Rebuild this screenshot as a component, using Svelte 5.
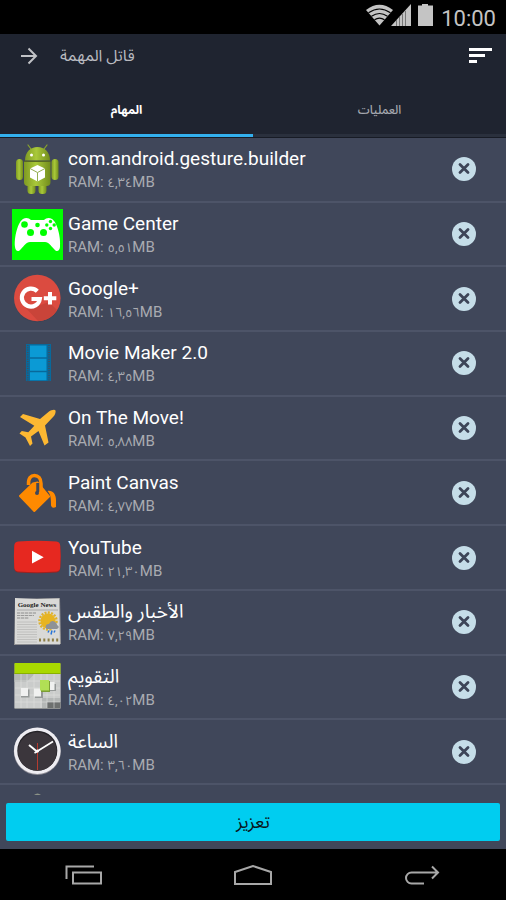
<script lang="ts">
  type App = { name: string; ram: string; icon: string };

  let apps: App[] = $state([
    { name: 'com.android.gesture.builder', ram: '٤,٣٤', icon: 'android' },
    { name: 'Game Center', ram: '٥,٥١', icon: 'game' },
    { name: 'Google+', ram: '١٦,٥٦', icon: 'gplus' },
    { name: 'Movie Maker 2.0', ram: '٤,٣٥', icon: 'movie' },
    { name: 'On The Move!', ram: '٥,٨٨', icon: 'plane' },
    { name: 'Paint Canvas', ram: '٤,٧٧', icon: 'paint' },
    { name: 'YouTube', ram: '٢١,٣٠', icon: 'youtube' },
    { name: 'الأخبار والطقس', ram: '٧,٢٩', icon: 'news' },
    { name: 'التقويم', ram: '٤,٠٢', icon: 'calendar' },
    { name: 'الساعة', ram: '٣,٦٠', icon: 'clock' }
  ]);

  let activeTab = $state(0);
  const tabs = ['المهام', 'العمليات'];

  function kill(app: App) {
    apps = apps.filter((a) => a.name !== app.name);
  }
</script>

{#snippet appIcon(name: string)}
  <svg class="app-icon" viewBox="0 0 51 51" aria-hidden="true">
    {#if name === 'android'}
      <defs>
        <linearGradient id="droid" x1="0" x2="1">
          <stop offset="0" stop-color="#7f9a22" />
          <stop offset=".45" stop-color="#a9c93a" />
          <stop offset="1" stop-color="#728c1c" />
        </linearGradient>
      </defs>
      <path d="M19 5l-3-4M32 5l3-4" stroke="#8aa52c" stroke-width="1.2" stroke-linecap="round" />
      <rect x="15.500" y="36" width="8" height="14" rx="3.500" fill="url(#droid)" />
      <rect x="26.500" y="36" width="8" height="14" rx="3.500" fill="url(#droid)" />
      <rect x="4" y="15" width="7" height="21" rx="3.500" fill="url(#droid)" />
      <rect x="39.500" y="15" width="7" height="21" rx="3.500" fill="url(#droid)" />
      <path d="M12 18h26.500v20q0 4-4 4h-18.500q-4 0-4-4z" fill="url(#droid)" />
      <path d="M13 16.500C13 8 18.500 3 25.500 3S38 8 38 16.500z" fill="url(#droid)" />
      <path d="M12 17.300h26.500" stroke="#5d7119" />
      <circle cx="19.500" cy="11" r="1.500" fill="#fff" />
      <circle cx="31.500" cy="11" r="1.500" fill="#fff" />
      <path d="M25.500 21l7.500 3.500v9l-7.500 4-7.500-4v-9z" fill="#fff" />
      <path d="M18 24.500l7.500 4 7.500-4M25.500 28.500v9" fill="none" stroke="#93ad50" />
    {:else if name === 'game'}
      <path d="M0 0h51v51H0z" fill="#0f0" />
      <path
        d="M11 10c3-2 6-1 8 1h13c2-2 5-3 8-1 5 3 9 18 8 28-.5 5-4 5-6 2-3-3-5-7-9-7H18c-4 0-6 4-9 7-2 3-5.500 3-6-2-1-10 3-25 8-28z"
        fill="#fff"
      />
      <g fill="#0f0">
        <circle cx="12.500" cy="15.500" r="3.300" />
        <circle cx="18.500" cy="23.500" r="3.500" />
        <circle cx="31.500" cy="23.500" r="3.500" />
        <circle cx="25.500" cy="16" r="2.300" />
        <circle cx="38.500" cy="12.500" r="1.700" />
        <circle cx="34.800" cy="16" r="1.700" />
        <circle cx="42.200" cy="16" r="1.700" />
        <circle cx="38.500" cy="19.500" r="1.700" />
      </g>
    {:else if name === 'gplus'}
      <circle cx="25.300" cy="26" r="23.300" fill="#3b3f4f" opacity=".5" />
      <circle cx="25.300" cy="25" r="23.300" fill="#db4b40" />
      <path d="M12 33l14 15c8 0 15-4 19-11l-8-8-11 4z" fill="#c94439" />
      <path
        d="M25.300 18.300a9 9 0 1 0 2.500 7.700h-8.300"
        fill="none"
        stroke="#fff"
        stroke-width="4.200"
      />
      <path d="M38 19v12.500M31.800 25.200h12.500" stroke="#fff" stroke-width="4" />
    {:else if name === 'movie'}
      <path d="M14 6h25v37H14z" fill="#08699b" />
      <path d="M18 7.500h16.500v11.800H18zM18 20.700h16.500v12H18zM18 34.300h16.500v8H18z" fill="#0b9ad5" />
      <path d="M15.700 7v36M37 7v36" stroke="#454b5b" stroke-width="1.500" stroke-dasharray="1 1.300" />
    {:else if name === 'plane'}
      <path
        d="M37 8.500C39 7 43 6 43.500 7.500 44 9 43 12 41.500 13.500L33 22.500l3.500 17-4 3L26.500 28 19 33.500l1.500 7-2.500 2.500-4.500-8.500-6-4 2.300-2.500 6.500 1.200 6-6.500L8 14l3-3 17 5z"
        fill="#fdb832"
      />
    {:else if name === 'paint'}
      <path
        d="M8 29L21 16.500 25.500 15.500 37 29.500 22.300 44z"
        fill="#ff8a00"
        stroke="#ff8a00"
        stroke-width="2"
        stroke-linejoin="round"
      />
      <path d="M27 25.500V16" stroke="#40475a" stroke-width="5.500" />
      <path
        d="M16.500 18c-.5-7 2.500-9.500 6-9.500s6.500 2.500 6.500 8v8q0 2.500-3 3"
        fill="none"
        stroke="#ff8a00"
        stroke-width="3.500"
      />
      <circle cx="25" cy="26" r="2" fill="#40475a" />
      <path d="M35.500 24c5-1 8.500 3 8.500 9v7q-4 2-5-1.500c0-6 0-11-3.500-14.500z" fill="#ff8a00" />
    {:else if name === 'youtube'}
      <path
        d="M6 10.500q19-2 38.500 0 3.500.5 3.700 4 .8 10.500 0 22-.2 3.500-3.700 4-19.500 1.500-38.500 0-3.500-.5-3.700-4-.8-11.500 0-22 .2-3.500 3.700-4z"
        fill="#9f211f"
      />
      <path
        d="M6 9.500q19-1.500 38.500 0 3.500.5 3.700 4 .8 10.500 0 22-.2 3.500-3.700 4-19.500 1.500-38.500 0-3.500-.5-3.700-4-.8-11.500 0-22 .2-3.500 3.700-4z"
        fill="#e62820"
      />
      <path d="M20 18.800v12.700l11.700-6.300z" fill="#fff" />
    {:else if name === 'news'}
      <path d="M3 2l45-1 1 46-47 1z" fill="#969696" />
      <path d="M3 1l22 1 22-.5 1 46-45-.5z" fill="#d9d9d7" />
      <text x="25" y="10" text-anchor="middle" class="masthead">Google News</text>
      <path d="M5 13h41" stroke="#aaa" />
      <path
        d="M5 16h19M5 18.500h17M5 21h12M5 25h20M5 27.500h20M5 30h20M5 32.500h20M5 35h20M5 37.500h20M5 40h20M5 42.500h20M5 45h20"
        stroke="#c0c0be"
      />
      <path d="M5 16h19M5 18.500h17M5 21h12" stroke="#999" stroke-dasharray="3 1" />
      <circle cx="36" cy="24" r="8.500" fill="none" stroke="#deb12d" stroke-width="2.500" stroke-dasharray="2 1.300" />
      <circle cx="36" cy="24" r="7.500" fill="#e7b421" />
      <path d="M34 31.500q-1.500-4.500 3-4.500 2-4.500 6-2 2 1 2 3 3.500 2 0 4H36q-1.500 0-2-.5z" fill="#8e9297" />
      <path d="M37 33.500l-1 2M40 33.500l-1 4M43 33.500l-1 2" stroke="#2774d8" stroke-width="1.500" />
      <path d="M27 43h20" stroke="#8c7d45" stroke-width="3" stroke-dasharray="2 2.300" />
    {:else if name === 'calendar'}
      <path d="M2.500 3h46v45h-46z" fill="#8f9292" />
      <path d="M2.500 13h46v34h-46z" fill="#cacccb" />
      <path d="M2.500 2h46v11h-46z" fill="#a9d800" />
      <path d="M2.500 12h46v1h-46z" fill="#89b000" />
      <path d="M2.500 13h20l-8 8h-12zM30 37h18v10H30z" fill="#b4b7b6" />
      <path d="M35 41h13.500v6H35z" fill="#6d706f" />
      <path d="M9 13v34M15 13v34M22 13v34M29 13v34M35 13v34M42 13v34M3 20h45M3 27h45M3 34h45M3 41h45" stroke="#dfe0df" stroke-width=".6" />
      <path d="M9 28.500h8.500v8H9zM23 29h8v8h-8zM36 23h8v7h-8z" fill="#959998" />
      <path d="M9 27h7v8H9zM22 27.500h7v8h-7zM36 21h6.500v8H36z" fill="#f0f1f0" />
      <path d="M29 20h9v11h-9z" fill="#7c9e35" />
      <path d="M28 19h9v10.500h-9z" fill="#b1df55" />
    {:else}
      <circle cx="25.300" cy="25.500" r="23.500" fill="#8c8b94" />
      <circle cx="25.300" cy="24.700" r="23.300" fill="#eeedf2" />
      <circle cx="25.300" cy="24.700" r="20" fill="#252328" />
      <circle cx="25.300" cy="25.500" r="19.300" fill="#3b363c" />
      <path d="M25.500 17v27" stroke="#b63b30" />
      <path d="M17 19l8.500 7" stroke="#fff" stroke-width="2" />
      <path d="M22.500 27L41 15.500" stroke="#fff" stroke-width="1.700" />
      <circle cx="25.500" cy="25" r="1.500" fill="#fff" />
    {/if}
  </svg>
{/snippet}

<div class="screen" lang="ar">
  <div class="status-bar">
    <svg width="70" height="24" viewBox="0 0 70 24" fill="#c4c4c4" aria-hidden="true">
      <path d="M14.500 22.500L1 7Q14.500-3.500 28 7z" />
      <path
        d="M3.500 9.700q11-7.400 22 0M6.500 13.200q8-5.400 16 0M9.500 16.800q5-3.400 10 0"
        fill="none"
        stroke="#000"
        stroke-width="1.200"
      />
      <path d="M46 1v22H26z" />
      <path d="M31.500 17v6M34.500 14v9M37.500 11v12M40.500 8v15" stroke="#777" />
      <path d="M53 2.500h4V1h6v1.500h5V23H53z" />
    </svg>
    <time>10:00</time>
  </div>

  <header>
    <div class="title-bar">
      <button class="icon-button" aria-label="رجوع">
        <svg width="18" height="18" viewBox="0 0 18 18" aria-hidden="true">
          <path d="M1 9h15M8.500 1.500L16 9l-7.500 7.500" fill="none" stroke="#c0c2c6" stroke-width="2" />
        </svg>
      </button>
      <h1>قاتل المهمة</h1>
      <button class="icon-button" aria-label="ترتيب">
        <svg width="24" height="18" viewBox="0 0 24 18" aria-hidden="true">
          <path d="M1 1h23v3H1zM1 7h16v3H1zM1 13h8v3H1z" fill="#fff" />
        </svg>
      </button>
    </div>
    <div class="tabs" role="tablist">
      {#each tabs as tab, i}
        <button
          role="tab"
          aria-selected={activeTab === i}
          class:active={activeTab === i}
          onclick={() => (activeTab = i)}
        >
          {tab}
        </button>
      {/each}
    </div>
  </header>

  <main>
    <ul>
      {#each apps as app (app.name)}
        <li>
          {@render appIcon(app.icon)}
          <div class="info">
            <span class="name">{app.name}</span>
            <span class="ram">RAM: <span class="amount">{app.ram}</span>MB</span>
          </div>
          <button class="kill" aria-label="إنهاء {app.name}" onclick={() => kill(app)}>
            <svg width="24" height="24" viewBox="0 0 24 24" aria-hidden="true">
              <circle cx="12" cy="12" r="12" fill="#c5dde8" />
              <path d="M8 7.500l8 8M16 7.500l-8 8" stroke="#3d4558" stroke-width="2.800" stroke-linecap="round" />
            </svg>
          </button>
        </li>
      {/each}
    </ul>
    <!-- top edge of the next row -->
    <div class="peek">
      <svg width="51" height="10" viewBox="0 0 51 10" aria-hidden="true">
        <path d="M22 10q3.500-3 7 0z" fill="#8c9388" />
      </svg>
    </div>
  </main>

  <div class="action">
    <button class="boost">تعزيز</button>
  </div>

  <nav>
    <button aria-label="التطبيقات الأخيرة">
      <svg width="38" height="20" viewBox="0 0 38 20" aria-hidden="true">
        <path d="M1.500 14V1.500H29M8 7.500h28v11H8z" />
      </svg>
    </button>
    <button aria-label="الرئيسية">
      <svg width="38" height="20" viewBox="0 0 38 20" aria-hidden="true">
        <path d="M1 19V7l18-6 18 6v12z" />
      </svg>
    </button>
    <button aria-label="عودة">
      <svg width="38" height="20" viewBox="0 0 38 20" aria-hidden="true">
        <path d="M21 18.500H8.500a5.500 5.500 0 0 1 0-11H35M29 1.500l6 6-6 6" />
      </svg>
    </button>
  </nav>
</div>

<style>
  :global(body) {
    margin: 0;
    background: #000;
  }

  .screen {
    display: flex;
    flex-direction: column;
    min-height: 100vh;
    font-family: Roboto, 'Noto Sans Arabic', 'DejaVu Sans', sans-serif;
    background: #40475a;
    color: #fff;
  }

  button {
    display: flex;
    align-items: center;
    justify-content: center;
    padding: 0;
    border: 0;
    background: none;
    color: inherit;
    font: inherit;
    cursor: pointer;
  }

  .status-bar {
    display: flex;
    align-items: center;
    justify-content: flex-end;
    gap: 6px;
    height: 34px;
    padding-right: 10px;
    background: #000;
    color: #c4c4c4;
    font-size: 22px;
  }

  .status-bar svg {
    margin-bottom: 4px;
  }

  .status-bar time {
    padding-top: 2px;
  }

  header {
    background: #1f2430;
    border-bottom: 1px solid #171b25;
  }

  .title-bar {
    display: flex;
    align-items: center;
    height: 44px;
    padding: 0 14px 0 20px;
  }

  h1 {
    flex: 1;
    margin: 0 0 0 22px;
    font-size: 16px;
    font-weight: 400;
    line-height: 24px;
    color: #b9bbc0;
  }

  .tabs {
    display: flex;
    height: 59px;
  }

  .tabs button {
    flex: 1;
    padding-top: 8px;
    border-bottom: 3px solid #2a303d;
    font-size: 12px;
    font-weight: 500;
    color: #a5a8af;
  }

  .tabs button.active {
    border-bottom-color: #33b0ee;
    font-weight: 700;
    color: #fff;
  }

  main {
    display: flex;
    flex: 1;
    flex-direction: column;
  }

  ul {
    display: grid;
    flex: 1;
    grid-auto-rows: minmax(64px, 1fr);
    margin: 0;
    padding: 0;
    list-style: none;
  }

  li {
    display: flex;
    align-items: center;
    padding: 0 30px 0 12px;
    border-bottom: 2px solid #4d5468;
  }

  .app-icon {
    flex: none;
    width: 51px;
    height: 51px;
  }

  .masthead {
    font: bold 7px 'Liberation Serif', serif;
    fill: #222;
  }

  .info {
    flex: 1;
    min-width: 0;
    padding: 3px 0 0 5px;
  }

  .name,
  .ram {
    display: block;
    white-space: nowrap;
  }

  .name {
    font-size: 19px;
    line-height: 24px;
  }

  .ram {
    font-size: 15px;
    line-height: 22px;
    color: #a9abb1;
  }

  .amount {
    font-size: 13px;
  }

  .kill {
    border-radius: 50%;
  }

  .peek {
    height: 10px;
    padding-left: 12px;
  }

  .peek svg {
    display: block;
  }

  .action {
    padding: 8px 6px;
  }

  .boost {
    width: 100%;
    height: 38px;
    border-radius: 2px;
    background: #00cdf0;
    color: #0a1620;
    font-size: 18px;
  }

  nav {
    display: flex;
    justify-content: space-around;
    height: 51px;
    background: #000;
  }

  nav button {
    flex: 1;
  }

  nav path {
    fill: none;
    stroke: #a8a8a8;
    stroke-width: 2;
  }
</style>
